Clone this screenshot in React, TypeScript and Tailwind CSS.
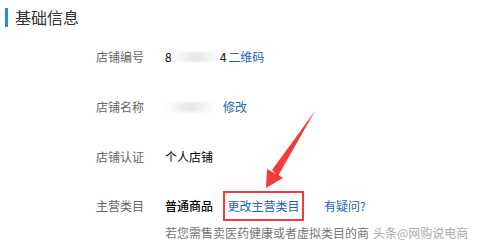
const Label = ({ children }: { children: string }) => (
  <div className="w-[69px] shrink-0 text-[#666]">{children}</div>
);

const Blur = ({ w }: { w: string }) => (
  <span className={`inline-block ${w} h-[10px] bg-gradient-to-r from-white via-[#e6e6e6] to-white blur-[1px]`} />
);

export default function App() {
  return (
    <div
      className="relative w-[478px] h-[247px] overflow-hidden bg-white text-[12px]"
      style={{ fontFamily: '"Noto Sans CJK SC", "Noto Sans", sans-serif' }}
    >
      {/* TITLE */}
      <div className="flex items-center h-[34px] pl-[5px]">
        <div className="w-[3px] h-[19px] bg-[#1e8fe1]" />
        <h1 className="ml-[7px] text-[16px] text-[#333] leading-none">基础信息</h1>
      </div>

      {/* FIELDS */}
      <div className="pl-[96px] pt-[14px] flex flex-col">
        <div className="flex items-center h-[17px]">
          <Label>店铺编号</Label>
          <span className="text-black">8</span>
          <Blur w="w-[48px]" />
          <span className="text-black">4</span>
          <span className="ml-[2px] text-[#1f64b0]">二维码</span>
        </div>
        <div className="flex items-center h-[17px] mt-[33px]">
          <Label>店铺名称</Label>
          <Blur w="w-[50px]" />
          <span className="ml-[8px] text-[#1f64b0]">修改</span>
        </div>
        <div className="flex items-center h-[17px] mt-[33px]">
          <Label>店铺认证</Label>
          <span className="text-black">个人店铺</span>
        </div>
        <div className="flex items-center h-[17px] mt-[32px]">
          <Label>主营类目</Label>
          <span className="text-black font-medium">普通商品</span>
          <span className="ml-[10px] h-[30px] w-[81px] flex items-center justify-center border-2 border-[#f03c3c] text-[#1f64b0]">
            更改主营类目
          </span>
          <span className="ml-[20px] text-[#1f64b0]">有疑问?</span>
        </div>
        <div className="flex items-center h-[17px] mt-[10px] pl-[69px] whitespace-nowrap">
          <span className="text-[#777]">若您需售卖医药健康或者虚拟类目的商</span>
          <span className="ml-[4px] text-[12px] text-[#aaa]">头条@网购说电商</span>
        </div>
      </div>

      {/* ARROW */}
      <svg className="absolute left-0 top-0" width="478" height="247" viewBox="0 0 478 247">
        <path d="M315 111 L274 172 L283 178 L266 188 L267 169 L276 174 Z" fill="#f23b3b" />
        <path d="M315 111 L272 170 L278 176 Z" fill="#f23b3b" />
      </svg>
    </div>
  );
}
